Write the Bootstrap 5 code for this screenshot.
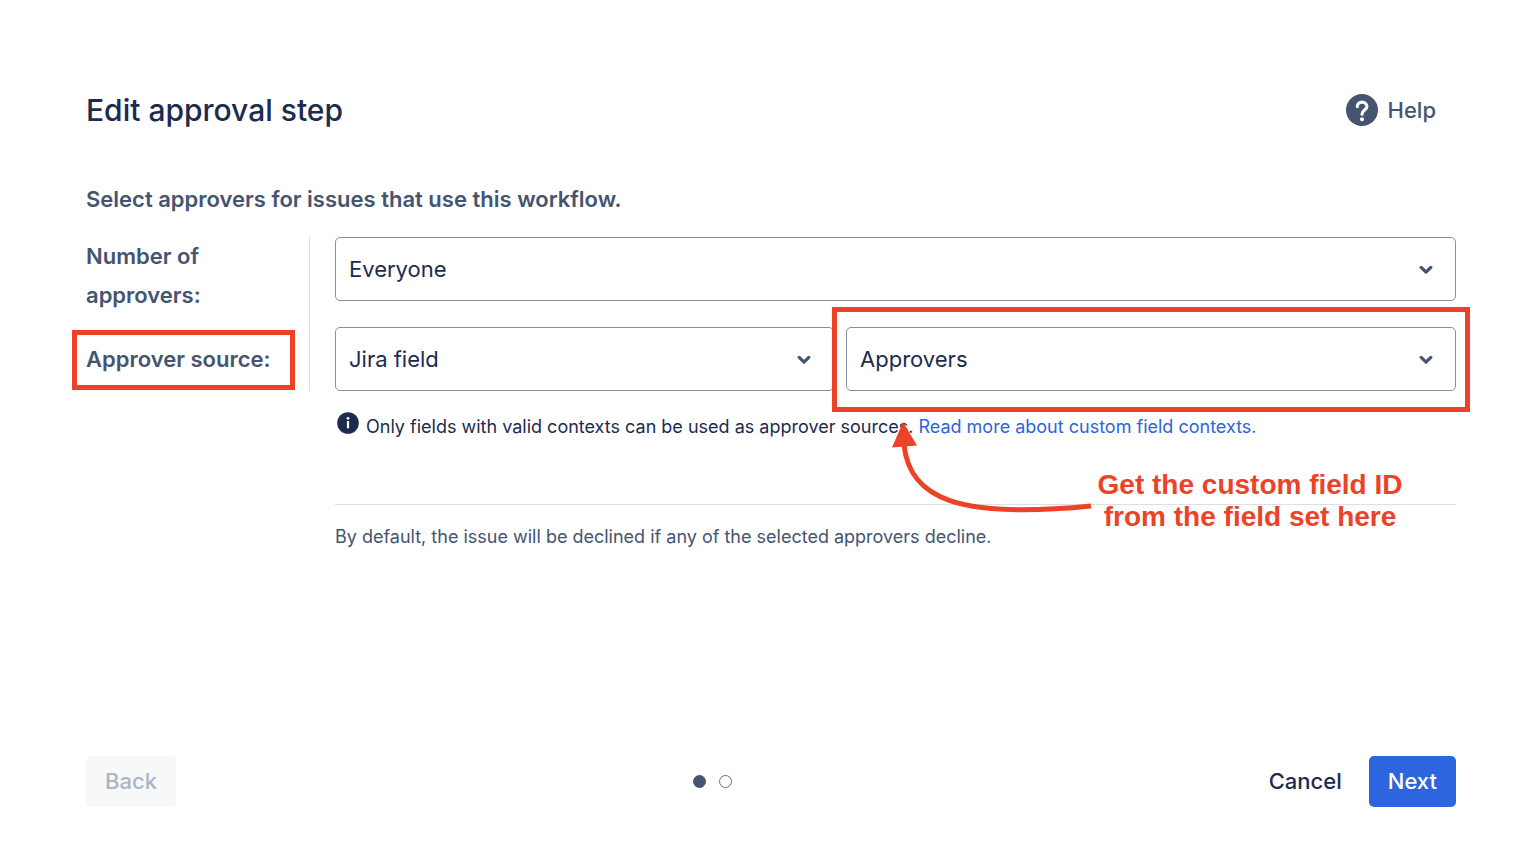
<!DOCTYPE html>
<html lang="en">
<head>
<meta charset="utf-8">
<meta name="viewport" content="width=device-width, initial-scale=1">
<title>Edit approval step</title>
<link href="https://cdn.jsdelivr.net/npm/bootstrap@5.3.0/dist/css/bootstrap.min.css" rel="stylesheet">
<style>
  :root { --ink: #1c2b4e; --slate: #45546f; --note: #ec4227; --action: #2c65dd; }
  body { font-family: Inter, "Liberation Sans", sans-serif; font-size: 22px; color: var(--ink); background: #fff; }
  .step-page { padding: 84px 82px 45px 86px; }
  .step-title { font-size: 30px; line-height: 52px; font-weight: 500; }
  .slate { color: var(--slate); }
  .help-link { font-weight: 500; gap: 10px; padding-right: 20px; }
  .intro { font-weight: 600; line-height: 40px; margin: 43px 0 18px; }
  .label-col { width: 224px; flex: none; border-right: 1px solid #dcdfe4; padding-bottom: 12px; }
  .label-col label { font-weight: 600; line-height: 39px; }
  .source-label { margin-top: 25px; }
  .field-col { margin-left: 25px; min-width: 0; }
  .field-stack { gap: 26px; }
  .field-pair { gap: 12px; }
  .source-field { flex: 45 1 0; }
  .approver-field { flex: 55 1 0; }
  .step-select {
    height: 64px; padding: 0 48px 0 13px; font-size: 22px; color: var(--ink);
    border: 1px solid #8590a2; border-radius: 5px;
    background-image: url("data:image/svg+xml,%3Csvg xmlns='http://www.w3.org/2000/svg' viewBox='0 0 14 10'%3E%3Cpath d='M2.2 2.4 7 7.1l4.800-4.700' fill='none' stroke='%2345546f' stroke-width='3.2' stroke-linecap='round' stroke-linejoin='round'/%3E%3C/svg%3E");
    background-size: 14px 10px; background-position: right 22px top 27px;
  }
  .callout { border: 5px solid var(--note); pointer-events: none; }
  .callout-label { inset: -10px -24px -11px -14px; }
  .callout-field { inset: -20px -14px -21px -14px; z-index: 2; }
  .note-arrow { left: 40px; top: 94px; z-index: 2; }
  .note-text {
    left: 240px; top: 142px; width: 328px; z-index: 2; text-align: center;
    font: bold 28px/32px "Liberation Sans", Arial, sans-serif; color: var(--note);
  }
  .hint { font-size: 18px; line-height: 30px; margin-top: 21px; gap: 7px; padding-left: 2px; }
  .hint a { color: var(--action); }
  .rule-note { font-size: 18px; line-height: 28px; margin-top: 62px; padding-top: 18px; border-top: 1px solid #dcdfe4; }
  .step-btn { --bs-btn-font-size: 22px; --bs-btn-font-weight: 500; --bs-btn-border-radius: 5px; --bs-btn-border-width: 0; --bs-btn-line-height: 51px; padding: 0 19px; }
  .btn-back { --bs-btn-disabled-color: #adb4c2; --bs-btn-disabled-bg: #f7f8fa; --bs-btn-disabled-opacity: 1; }
  .btn-cancel { --bs-btn-color: var(--ink); }
  .btn-next { --bs-btn-color: #fff; --bs-btn-bg: var(--action); --bs-btn-hover-color: #fff; --bs-btn-hover-bg: #1f55c8; }
  .dots { gap: 13px; }
  .dots span { width: 13px; height: 13px; border: 1px solid #65728a; border-radius: 50%; }
  .dots .on { background: var(--slate); border-color: var(--slate); }
</style>
</head>
<body>
<main class="step-page min-vh-100 d-flex flex-column">
  <header class="d-flex justify-content-between align-items-center">
    <h1 class="step-title mb-0">Edit approval step</h1>
    <a href="#" class="help-link slate d-flex align-items-center text-decoration-none">
      <svg width="32" height="32" viewBox="0 0 32 32" aria-hidden="true">
        <circle cx="16" cy="16" r="16" fill="#45546f"/>
        <path d="M11.300 12.600C11.300 9.900 13.300 8.200 16 8.200s4.900 1.700 4.900 4.300c0 3.700-4.900 3.500-4.900 7.700" fill="none" stroke="#fff" stroke-width="3.200" stroke-linecap="round"/>
        <circle cx="16" cy="25.200" r="2" fill="#fff"/>
      </svg>
      Help
    </a>
  </header>

  <form class="d-flex flex-column flex-grow-1">
    <p class="intro slate">Select approvers for issues that use this workflow.</p>
    <div class="d-flex align-items-start">
      <div class="label-col slate d-flex flex-column align-items-start">
        <label for="count">Number of<br>approvers:</label>
        <div class="source-label position-relative">
          <label for="source">Approver source:</label>
          <div class="callout callout-label position-absolute"></div>
        </div>
      </div>
      <div class="field-col flex-grow-1">
        <div class="field-stack d-flex flex-column">
          <select id="count" class="form-select step-select"><option>Everyone</option></select>
          <div class="field-pair d-flex">
            <div class="source-field">
              <select id="source" class="form-select step-select"><option>Jira field</option></select>
            </div>
            <div class="approver-field position-relative">
              <select class="form-select step-select" aria-label="Approver field"><option>Approvers</option></select>
              <div class="callout callout-field position-absolute"></div>
              <svg class="note-arrow position-absolute" width="210" height="95" viewBox="0 0 210 95" aria-hidden="true">
                <path d="M18 24C24 78 72 98 205 85" fill="none" stroke="#ec4227" stroke-width="5"/>
                <path d="M17 1 31 24.500 6 26.500Z" fill="#ec4227"/>
              </svg>
              <div class="note-text position-absolute">Get the custom field ID<br>from the field set here</div>
            </div>
          </div>
        </div>
        <div class="hint d-flex align-items-start">
          <svg class="flex-shrink-0" width="22" height="22" viewBox="0 0 22 22" aria-hidden="true">
            <circle cx="11" cy="11" r="10.800" fill="#1c2b4e"/>
            <circle cx="11" cy="6.300" r="1.400" fill="#fff"/>
            <path d="M11 9v7.300" stroke="#fff" stroke-width="2.200"/>
          </svg>
          <span>Only fields with valid contexts can be used as approver sources. <a href="#" class="text-decoration-none">Read more about custom field contexts.</a></span>
        </div>
        <p class="rule-note slate mb-0">By default, the issue will be declined if any of the selected approvers decline.</p>
      </div>
    </div>
    <footer class="d-flex justify-content-between align-items-center mt-auto">
      <button type="button" class="btn step-btn btn-back" disabled>Back</button>
      <div class="dots d-flex" role="img" aria-label="Step 1 of 2"><span class="on"></span><span></span></div>
      <div class="d-flex gap-2">
        <button type="button" class="btn step-btn btn-cancel">Cancel</button>
        <button type="submit" class="btn step-btn btn-next">Next</button>
      </div>
    </footer>
  </form>
</main>
<script src="https://cdn.jsdelivr.net/npm/bootstrap@5.3.0/dist/js/bootstrap.bundle.min.js"></script>
</body>
</html>
